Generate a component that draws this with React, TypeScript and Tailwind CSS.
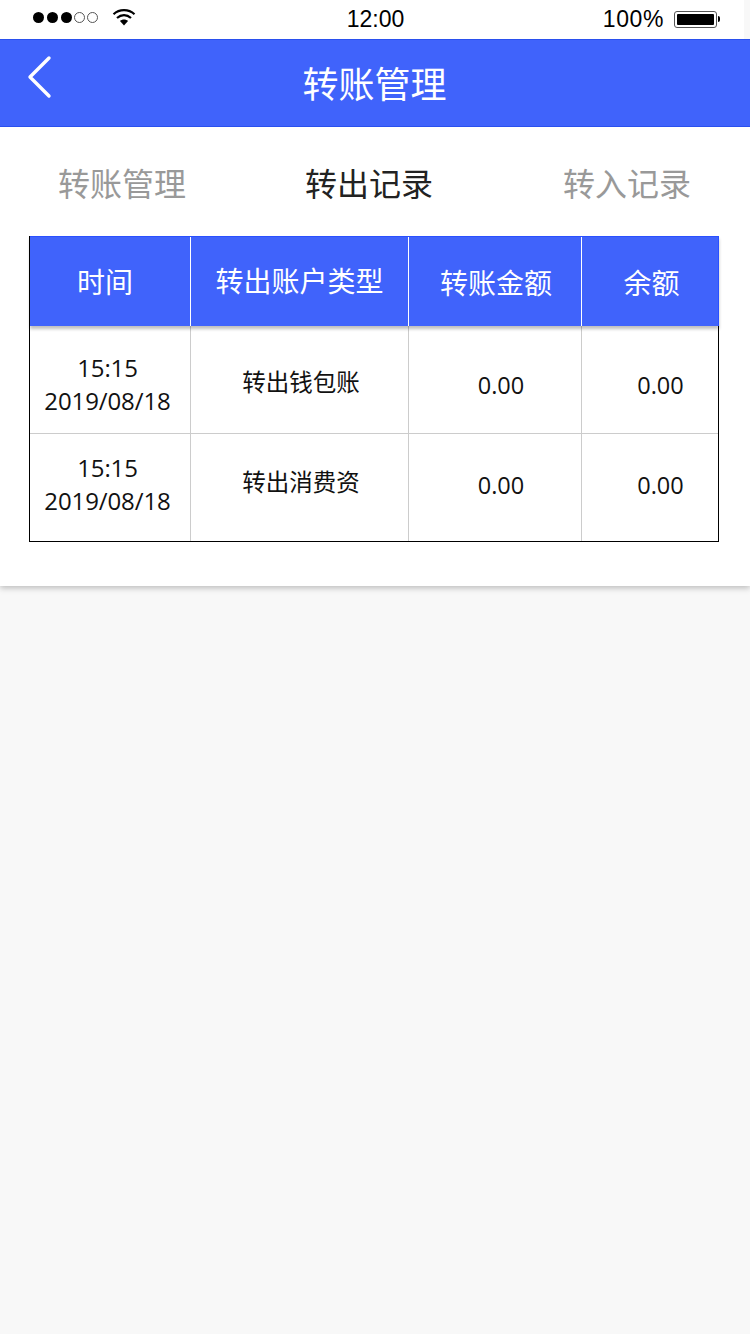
import React from "react";

const cjk = "font-['Noto_Sans_CJK_SC',sans-serif]";
const num = "font-['Open_Sans','Noto_Sans_CJK_SC',sans-serif]";

// row offsets are not the same in the two rows of the design
const rows = [
  {
    time: "15:15",
    date: "2019/08/18",
    type: "转出钱包账",
    dateBox: "pt-[8px]",
    typeBox: "pt-[4px]",
    amountBox: "pt-[13px]",
    rowBox: "h-[108px] border-b border-[#ccc]",
  },
  {
    time: "15:15",
    date: "2019/08/18",
    type: "转出消费资",
    dateBox: "pb-[7px]",
    typeBox: "pb-[12px]",
    amountBox: "pb-[4px]",
    rowBox: "h-[107px]",
  },
];

const StatusBar: React.FC = () => (
  <div className="h-[39px] bg-white flex font-['Liberation_Sans',sans-serif] text-black">
    <div className="flex-1 flex items-center justify-between pl-[33px] pr-[24px]">
      <div className="flex items-center w-[200px] -mt-[5px]">
        <div className="flex items-center gap-[3px]">
          <span className="w-[11px] h-[11px] rounded-full bg-black" />
          <span className="w-[11px] h-[11px] rounded-full bg-black" />
          <span className="w-[11px] h-[11px] rounded-full bg-black" />
          <span className="-ml-[1px] w-[11px] h-[11px] rounded-full border border-[#555]" />
          <span className="-ml-[1px] w-[11px] h-[11px] rounded-full border border-[#555]" />
        </div>
        <svg className="ml-[14px]" width="24" height="18" viewBox="0 0 24 18" fill="none">
          <path d="M1.5 6.2C7.5 .8 16.5 .8 22.5 6.2" stroke="#000" strokeWidth="2.2" />
          <path d="M5 10C9.2 6.2 14.8 6.2 19 10" stroke="#000" strokeWidth="2.2" />
          <path d="M8 13L12 17.5 16 13C14 11 10 11 8 13Z" fill="#000" />
        </svg>
      </div>
      <div className="text-[23px] leading-none -ml-[2px] -mt-[1px]">12:00</div>
      <div className="flex items-center justify-end w-[200px] -mt-[1px]">
        <span className="text-[23px] leading-none tracking-[0.6px]">100%</span>
        <div className="ml-[10px] w-[43px] h-[17px] rounded-[3px] border border-[#555] p-[2px]">
          <div className="w-full h-full bg-black rounded-[1px]" />
        </div>
        <div className="ml-[1px] w-[2px] h-[6px] bg-black rounded-r-full" />
      </div>
    </div>
    <div className="w-[6px] bg-[#f8f8f8]" />
  </div>
);

const App: React.FC = () => {
  return (
    <div className={`w-[750px] h-[1334px] bg-[#f8f8f8] overflow-hidden ${cjk}`}>
      <StatusBar />

      <div className="relative h-[88px] bg-[#4063fb] border-y border-[#2a50ee] flex items-center justify-center">
        <svg className="absolute left-[26px] top-[15px]" width="28" height="44" viewBox="0 0 28 44" fill="none">
          <path d="M23 3L4 22L23 41" stroke="#fff" strokeWidth="3.4" strokeLinecap="round" strokeLinejoin="round" />
        </svg>
        <span className="text-[36px] leading-none text-white -ml-[1px] -mt-[3px]">转账管理</span>
      </div>

      <div className="bg-white h-[459px] shadow-[0_2px_6px_rgba(0,0,0,0.25)]">
        <div className="h-[109px] flex items-center text-[32px] leading-none">
          <div className="w-[244px] text-center text-[#999]">转账管理</div>
          <div className="w-[250px] text-center text-[#222]">转出记录</div>
          <div className="w-[256px] pl-[10px] text-center text-[#999]">转入记录</div>
        </div>

        <div className="mx-[29px] w-[690px] h-[306px] border border-black">
          <div className="relative -mt-px -mr-px h-[90px] grid grid-cols-[160px_218px_173px_138px] bg-[#4063fb] border-t border-r border-[#2a50ff] text-white text-[28px] shadow-[0_3px_3px_rgba(0,0,0,0.25)]">
            <div className="flex items-center justify-center pr-[10px] pb-[1px]">时间</div>
            <div className="flex items-center justify-center border-l border-white pb-[3px]">转出账户类型</div>
            <div className="flex items-center justify-center border-l border-white pl-[2px]">转账金额</div>
            <div className="flex items-center justify-center border-l border-white pl-[2px]">余额</div>
          </div>
          {rows.map((row) => (
            <div
              key={row.type}
              className={`grid grid-cols-[160px_218px_173px_137px] text-[#111] ${row.rowBox}`}
            >
              <div className={`${num} flex flex-col items-center justify-center pr-[5px] text-[24px] leading-[33px] tracking-[-0.1px] ${row.dateBox}`}>
                <div>{row.time}</div>
                <div>{row.date}</div>
              </div>
              <div className={`flex items-center justify-center border-l border-[#ccc] text-[23.5px] pl-[3px] ${row.typeBox}`}>{row.type}</div>
              <div className={`flex items-center justify-center border-l border-[#ccc] ${row.amountBox}`}>
                <span className={`${num} text-[23.5px] pl-[12px]`}>0.00</span>
              </div>
              <div className={`flex items-center justify-center border-l border-[#ccc] ${row.amountBox}`}>
                <span className={`${num} text-[23.5px] pl-[21px]`}>0.00</span>
              </div>
            </div>
          ))}
        </div>
      </div>
    </div>
  );
};

export default App;
